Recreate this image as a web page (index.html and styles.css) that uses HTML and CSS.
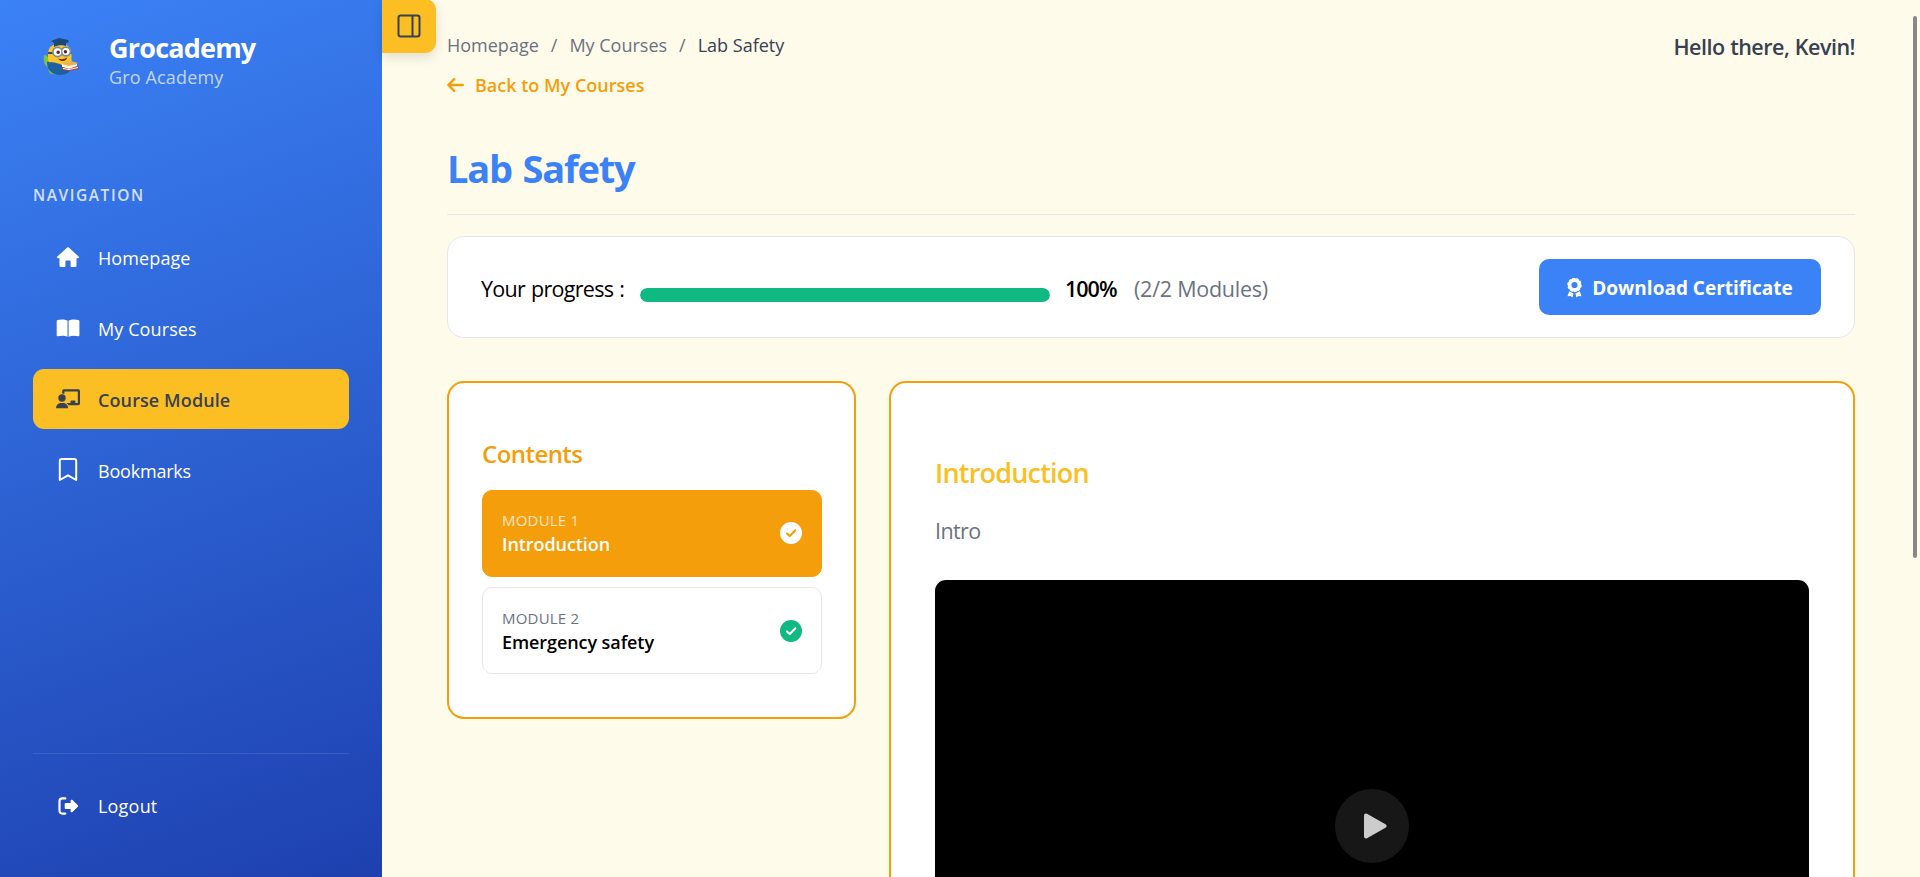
FILE: index.html
```html
<!DOCTYPE html>
<html lang="en">
<head>
<meta charset="utf-8">
<title>Lab Safety - Grocademy</title>
<link rel="stylesheet" href="styles.css">
</head>
<body>
<div class="app">
  <aside class="sidebar">
    <div class="brand">
      <svg class="brand-logo" viewBox="0 0 36 37">
        <path d="M1 17c4 0 5 4 5 8 3 4 7 7 10 11-6 1-12 0-10-6-4-2-6-6-5-13z" fill="#7cc63b"/>
        <path d="M4 24c3-2 7 0 12 1s10 0 12 3c1 6-5 9-11 9C9 37 4 32 4 24z" fill="#1d62a0"/>
        <path d="M5 16C5 9 10 5.500 17 5.500s11.500 4 11.500 11v6c0 4-5 6.500-10.500 6.500S6 27 5 22z" fill="#fbc62c"/>
        <path d="M8 3l8-3 9 2 1 2-3 1v3c-3-1-9-1-12 1V5z" fill="#194a79"/>
        <path d="M5 14h23.500v2H5z" fill="#45484e"/>
        <circle cx="14.500" cy="14" r="5.400" fill="#7f8a92"/><circle cx="23" cy="13.500" r="5.200" fill="#7f8a92"/>
        <circle cx="14.500" cy="14" r="3.800" fill="#fff"/><circle cx="23" cy="13.500" r="3.600" fill="#fff"/>
        <circle cx="15.200" cy="14.200" r="1.700" fill="#4b2c1d"/><circle cx="22.400" cy="13.800" r="1.700" fill="#4b2c1d"/>
        <path d="M15 20.500c3 1 6 1 9-1 0 4-6 5-9 1z" fill="#702a1d"/>
        <path d="M6 24c4 0 9 1 13 3v5c-5 1-11-2-13-8z" fill="#1d62a0"/>
        <path d="M19 25l9-2 7 2-9 4z" fill="#e9b44c"/><path d="M19 26l7 2 8-2v2l-8 3-7-2z" fill="#fff2d7"/>
        <path d="M19 29l7 2 9-3 1 3-10 2-8-2z" fill="#b83a37"/><path d="M20 30l6 1 9-2v1l-9 2-6-1z" fill="#fff"/>
      </svg>
      <div class="brand-text">
        <div class="brand-name">Grocademy</div>
        <div class="brand-sub">Gro Academy</div>
      </div>
    </div>
    <div class="nav-label">NAVIGATION</div>
    <nav class="nav">
      <a class="nav-item">
        <svg class="nav-icon" viewBox="0 0 24 24" fill="currentColor"><path d="M11.200 2.500a1.200 1.200 0 0 1 1.600 0l9.900 9.100c.7.700.3 1.600-.6 1.600H20.500V20.500a1.500 1.500 0 0 1-1.500 1.500H15.500a.9.900 0 0 1-.9-.9V16.500a1 1 0 0 0-1-1h-3.200a1 1 0 0 0-1 1v4.600a.9.900 0 0 1-.9.900H5a1.500 1.500 0 0 1-1.500-1.500V13.200H1.900c-.9 0-1.300-.9-.6-1.600z"/></svg>
        <span class="nav-text">Homepage</span></a>
      <a class="nav-item">
        <svg class="nav-icon" viewBox="0 0 24 24" fill="currentColor"><path d="M11.500 4.600C8.900 3.100 4.700 3.100 1.500 4c-.5.200-.8.500-.8 1v14.500c0 .6.500.9 1 .8 3-.8 6.800-1 9.800.5zM12.600 4.600c2.600-1.500 6.800-1.500 10-.6.500.2.800.5.800 1v14.500c0 .6-.5.900-1 .8-3-.8-6.800-1-9.800.5z"/></svg>
        <span class="nav-text">My Courses</span></a>
      <a class="nav-item active">
        <svg class="nav-icon" viewBox="0 0 24 24" fill="currentColor"><circle cx="6" cy="11" r="3.700"/><path d="M0 21.300c0-3.200 2.400-5.300 5-5.300h2.200c2.600 0 4.900 2.100 4.900 5.300z"/><path d="M6.200 6.500V4a1.700 1.700 0 0 1 1.700-1.700h14.400A1.700 1.700 0 0 1 24 4v12.500a1.700 1.700 0 0 1-1.700 1.700H12.500a6 6 0 0 0-2-2.100h4v-1.700a1 1 0 0 1 1-1h2.900a1 1 0 0 1 1 1v1.700h2.400V4.600H8.400v2.500a5 5 0 0 0-2.200-.6z"/></svg>
        <span class="nav-text">Course Module</span></a>
      <a class="nav-item">
        <svg class="nav-icon" viewBox="0 0 24 24" fill="none" stroke="currentColor" stroke-width="2" stroke-linejoin="round"><path d="M3.800 22V3a2 2 0 0 1 2-2h12.400a2 2 0 0 1 2 2v19L12 17.300z"/></svg>
        <span class="nav-text tight">Bookmarks</span></a>
    </nav>
    <div class="sidebar-foot">
      <a class="nav-item">
        <svg class="nav-icon" viewBox="0 0 24 24"><path d="M9.300 4.400H6.300a2.800 2.800 0 0 0-2.800 2.800v9.600a2.800 2.800 0 0 0 2.800 2.800h3" fill="none" stroke="currentColor" stroke-width="2.200" stroke-linecap="round"/><path d="M8.700 10a1 1 0 0 1 1-1h4.900V6.800c0-1.100 1.200-1.500 1.900-.8l5.300 5.200a1.100 1.100 0 0 1 0 1.600L16.500 18c-.7.700-1.900.3-1.900-.8V15H9.700a1 1 0 0 1-1-1z" fill="currentColor"/></svg>
        <span class="nav-text">Logout</span></a>
    </div>
  </aside>

  <main class="main">
    <button class="toggle" aria-label="Toggle sidebar">
      <svg class="toggle-icon" viewBox="0 0 24 24" fill="none" stroke="currentColor" stroke-width="2"><rect x="1.500" y="1.500" width="21" height="21" rx="2.200"/><path d="M15.500 1.500v21"/></svg>
    </button>
    <header class="topbar">
      <div class="trail">
        <div class="crumbs"><span>Homepage</span><span>/</span><span>My Courses</span><span>/</span><span class="current">Lab Safety</span></div>
        <a class="back"><svg class="back-icon" viewBox="0 0 17 14" fill="none" stroke="currentColor" stroke-width="2.400" stroke-linecap="round" stroke-linejoin="round"><path d="M7.200 1.200L1.300 7l5.900 5.800M1.500 7h14.300"/></svg><span>Back to My Courses</span></a>
      </div>
      <div class="hello">Hello there, Kevin!</div>
    </header>
    <h1 class="title">Lab Safety</h1>

    <section class="progress">
      <span class="progress-label">Your progress :</span>
      <div class="track"><div class="fill" style="width:100%"></div></div>
      <span class="percent">100%</span>
      <span class="count">(2/2 Modules)</span>
      <button class="download">
        <svg class="award" viewBox="0 0 15 20"><circle cx="7.500" cy="7" r="4.900" fill="none" stroke="currentColor" stroke-width="3.600"/><circle cx="7.500" cy="7" r="6.600" fill="none" stroke="currentColor" stroke-width="1.200" stroke-dasharray="2.600 1.500"/><path d="M2.200 13.300l4.400 2.100L5.500 19.500l-2-1.500-3 .2zM12.800 13.300l-4.400 2.100 1.100 4.100 2-1.500 3 .2z" fill="currentColor"/></svg>
        <span>Download Certificate</span>
      </button>
    </section>

    <div class="columns">
      <section class="contents">
        <h2 class="contents-title">Contents</h2>
        <div class="modules">
          <div class="module selected">
            <div><div class="module-no">MODULE 1</div><div class="module-name">Introduction</div></div>
            <svg class="check" viewBox="0 0 22 22"><circle cx="11" cy="11" r="11" fill="currentColor"/><path class="tick" d="M7 11.500l2.700 2.500L15.200 8.400" fill="none" stroke-width="2.200" stroke-linecap="round" stroke-linejoin="round"/></svg>
          </div>
          <div class="module">
            <div><div class="module-no">MODULE 2</div><div class="module-name">Emergency safety</div></div>
            <svg class="check" viewBox="0 0 22 22"><circle cx="11" cy="11" r="11" fill="currentColor"/><path class="tick" d="M7 11.500l2.700 2.500L15.200 8.400" fill="none" stroke-width="2.200" stroke-linecap="round" stroke-linejoin="round"/></svg>
          </div>
        </div>
      </section>
      <section class="lesson">
        <h2 class="lesson-title">Introduction</h2>
        <p class="lesson-text">Intro</p>
        <div class="video">
          <div class="play"><svg class="play-icon" viewBox="0 0 24 26"><path d="M3 2.500v21L21.500 13z" fill="#ccc" stroke="#ccc" stroke-width="4" stroke-linejoin="round"/></svg></div>
        </div>
      </section>
    </div>
    <div class="scrollbar"></div>
  </main>
</div>
</body>
</html>
```

FILE: styles.css
```css
* { box-sizing: border-box; }
body { margin: 0; font-family: "Open Sans", "Noto Sans", sans-serif; background: #fffbeb; color: #000; }
h1, h2, p { margin: 0; }
button { border: 0; padding: 0; font-family: inherit; }
.app { display: flex; height: 877px; overflow: hidden; position: relative; }

.sidebar { width: 382px; flex: none; height: 877px; padding: 31px 33px 41px; display: flex; flex-direction: column; color: #fff; background: linear-gradient(160deg, #3b82f6 0%, #1e40af 100%); }
.brand { display: flex; align-items: flex-start; height: 154px; padding-left: 10px; gap: 30px; }
.brand-logo { width: 36px; height: 37px; margin-top: 7px; }
.brand-name { font-size: 27px; line-height: 33px; font-weight: 700; letter-spacing: -.8px; }
.brand-sub { font-size: 18px; line-height: 26px; letter-spacing: .15px; color: rgba(255,255,255,.7); }
.nav-label { font-size: 15.500px; line-height: 20px; font-weight: 600; letter-spacing: 1.550px; color: rgba(255,255,255,.8); margin-bottom: 22px; }
.nav { display: flex; flex-direction: column; gap: 11px; }
.nav-item { height: 60px; display: flex; align-items: center; gap: 18px; padding-left: 23px; border-radius: 11px; font-size: 18px; }
.nav-icon { width: 24px; height: 24px; }
.nav-text { padding-top: 2px; letter-spacing: .1px; }
.nav-text.tight { letter-spacing: -.2px; }
.nav-item.active { background: #fbbf24; color: #374151; font-weight: 600; }
.sidebar-foot { margin-top: auto; border-top: 1px solid rgba(255,255,255,.1); padding-top: 22px; }
.sidebar-foot .nav-text { padding-top: 0; letter-spacing: .2px; }

.main { flex: 1; min-width: 0; padding: 31px 65px 0; }
.toggle { position: absolute; left: 382px; top: -1px; width: 54px; height: 54px; border-radius: 0 11px 11px 0; background: #fbbf24; color: #374151; display: flex; align-items: center; justify-content: center; box-shadow: 0 4px 12px rgba(0,0,0,.12); }
.toggle-icon { width: 24px; height: 24px; margin: 0 1px 1px 0; }
.topbar { display: flex; justify-content: space-between; height: 110px; }
.crumbs { display: flex; gap: 12px; font-size: 18px; line-height: 28px; color: #6b7280; margin-bottom: 12px; }
.current { color: #374151; }
.back { display: flex; align-items: center; gap: 11px; font-size: 18px; line-height: 28px; font-weight: 600; color: #f59e0b; }
.back-icon { width: 17px; height: 14px; }
.hello { font-size: 21.500px; line-height: 32px; font-weight: 600; letter-spacing: -.5px; word-spacing: .5px; color: #374151; }
.title { font-size: 38px; line-height: 52px; font-weight: 700; letter-spacing: -1.200px; word-spacing: 2px; color: #3b82f6; padding-top: 1px; padding-bottom: 20px; border-bottom: 1px solid #e5e7eb; }

.progress { display: flex; align-items: center; height: 102px; margin-top: 21px; padding: 0 33px; background: #fff; border: 1px solid #e5e7eb; border-radius: 17px; font-size: 21.500px; line-height: 30px; }
.progress-label { width: 144px; white-space: nowrap; letter-spacing: -.7px; word-spacing: 1px; margin-right: 15px; margin-top: 4px; }
.track { width: 410px; height: 14px; border-radius: 7px; background: #e5e7eb; margin: 16px 15px 0 0; overflow: hidden; }
.fill { height: 14px; border-radius: 7px; background: #10b981; }
.percent { width: 52px; white-space: nowrap; font-weight: 600; letter-spacing: -1px; margin: 4px 17px 0 0; }
.count { white-space: nowrap; color: #6b7280; letter-spacing: -.25px; margin-top: 4px; }
.download { margin-left: auto; width: 282px; height: 56px; border-radius: 10px; background: #3b82f6; color: #fff; display: flex; align-items: center; justify-content: center; gap: 10px; padding-top: 2px; font-size: 19px; font-weight: 700; }
.award { width: 15px; height: 20px; }

.columns { display: flex; align-items: flex-start; gap: 33px; margin-top: 43px; }
.contents { width: 409px; flex: none; height: 338px; padding: 54px 32px 0 33px; background: #fff; border: 2px solid #f59e0b; border-radius: 17px; }
.contents-title { font-size: 24px; line-height: 34px; font-weight: 600; letter-spacing: -.550px; color: #f59e0b; margin-bottom: 19px; }
.modules { display: flex; flex-direction: column; gap: 10px; }
.module { height: 87px; display: flex; align-items: center; justify-content: space-between; padding: 1px 19px 0; border: 1px solid #e5e7eb; border-radius: 10px; color: #000; }
.module-no { font-size: 15px; line-height: 22px; letter-spacing: .2px; color: #6b7280; }
.module-name { font-size: 18px; line-height: 26px; font-weight: 600; letter-spacing: -.08px; }
.check { width: 22px; height: 22px; color: #10b981; }
.tick { stroke: #fff; }
.module.selected { background: #f59e0b; border-color: #f59e0b; color: #fff; padding: 0 19px 1px; }
.selected .module-no { color: rgba(255,255,255,.75); }
.selected .check { color: #fff; }
.selected .tick { stroke: #f59e0b; }
.lesson { flex: 1; min-width: 0; height: 760px; padding: 71px 44px 0; background: #fff; border: 2px solid #f59e0b; border-radius: 17px; }
.lesson-title { font-size: 27px; line-height: 38px; font-weight: 600; letter-spacing: -.8px; color: #fbbf24; margin-bottom: 23px; }
.lesson-text { font-size: 21.500px; line-height: 32px; letter-spacing: -.6px; color: #6b7280; margin-bottom: 33px; }
.video { height: 492px; border-radius: 11px; background: #000; display: flex; align-items: center; justify-content: center; }
.play { width: 74px; height: 74px; border-radius: 50%; background: #171717; display: flex; align-items: center; justify-content: center; padding-left: 6px; }
.play-icon { width: 24px; height: 26px; }
.scrollbar { position: absolute; left: 1913px; top: 16px; width: 4px; height: 542px; border-radius: 2px; background: #888; }
```
